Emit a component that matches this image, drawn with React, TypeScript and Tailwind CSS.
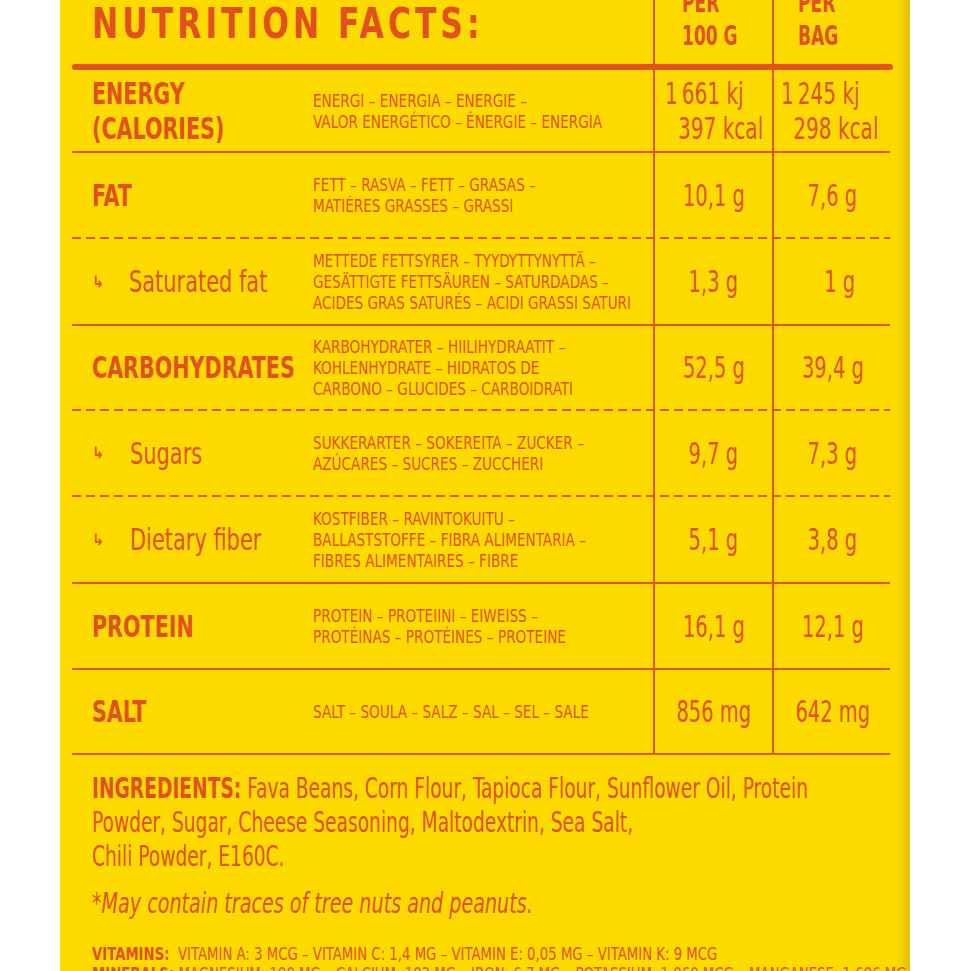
import React from "react";

const FONT = "font-['Liberation_Sans_Narrow','DejaVu_Sans_Condensed','Roboto',sans-serif] [font-stretch:condensed]";

function X({ c, children }: { c: string; children: React.ReactNode }) {
  return <span className={`inline-block whitespace-nowrap ${c}`}>{children}</span>;
}

type Row = {
  label: React.ReactNode;
  sub?: boolean;
  trans: string[];
  v1: React.ReactNode;
  v2: React.ReactNode;
  h: string;
  line: "solid" | "dashed";
  energy?: boolean;
};

const NB = "\u202F";

const rows: Row[] = [
  {
    label: (
      <>
        ENERGY
        <br />
        (CALORIES)
      </>
    ),
    trans: ["ENERGI – ENERGIA – ENERGIE –", "VALOR ENERGÉTICO – ÉNERGIE – ENERGIA"],
    v1: (
      <div className="flex flex-col items-start leading-[35px]">
        <span>{`1${NB}661 kj`}</span>
        <span className="pl-[18px]">397 kcal</span>
      </div>
    ),
    v2: (
      <div className="flex flex-col items-start leading-[35px]">
        <span>{`1${NB}245 kj`}</span>
        <span className="pl-[17px]">298 kcal</span>
      </div>
    ),
    h: "h-[81px]",
    line: "solid",
    energy: true,
  },
  {
    label: "FAT",
    trans: ["FETT – RASVA – FETT – GRASAS –", "MATIÉRES GRASSES – GRASSI"],
    v1: "10,1 g",
    v2: "7,6 g",
    h: "h-[84px]",
    line: "dashed",
  },
  {
    label: "Saturated fat",
    sub: true,
    trans: [
      "METTEDE FETTSYRER – TYYDYTTYNYTTÄ –",
      "GESÄTTIGTE FETTSÄUREN – SATURDADAS –",
      "ACIDES GRAS SATURÉS – ACIDI GRASSI SATURI",
    ],
    v1: "1,3 g",
    v2: <span className="pl-[20px]">1 g</span>,
    h: "h-[85px]",
    line: "solid",
  },
  {
    label: "CARBOHYDRATES",
    trans: ["KARBOHYDRATER – HIILIHYDRAATIT –", "KOHLENHYDRATE – HIDRATOS DE", "CARBONO – GLUCIDES – CARBOIDRATI"],
    v1: "52,5 g",
    v2: "39,4 g",
    h: "h-[83px]",
    line: "dashed",
  },
  {
    label: "Sugars",
    sub: true,
    trans: ["SUKKERARTER – SOKEREITA – ZUCKER –", "AZÚCARES – SUCRES – ZUCCHERI"],
    v1: "9,7 g",
    v2: "7,3 g",
    h: "h-[84px]",
    line: "dashed",
  },
  {
    label: "Dietary fiber",
    sub: true,
    trans: ["KOSTFIBER – RAVINTOKUITU –", "BALLASTSTOFFE – FIBRA ALIMENTARIA –", "FIBRES ALIMENTAIRES – FIBRE"],
    v1: "5,1 g",
    v2: "3,8 g",
    h: "h-[85px]",
    line: "solid",
  },
  {
    label: "PROTEIN",
    trans: ["PROTEIN – PROTEIINI – EIWEISS –", "PROTÉINAS – PROTÉINES – PROTEINE"],
    v1: "16,1 g",
    v2: "12,1 g",
    h: "h-[84px]",
    line: "solid",
  },
  {
    label: "SALT",
    trans: ["SALT – SOULA – SALZ – SAL – SEL – SALE"],
    v1: "856 mg",
    v2: "642 mg",
    h: "h-[83px]",
    line: "solid",
  },
];

function Sep({ kind }: { kind: "solid" | "dashed" }) {
  if (kind === "solid") return <div className="h-[2px] w-[818px] bg-[#E4531C]" />;
  return (
    <div className="h-[2px] w-[818px] bg-[linear-gradient(to_right,#E4531C_9px,transparent_9px)] bg-[length:14px_2px] bg-repeat-x" />
  );
}

export default function App() {
  return (
    <div className={`min-h-screen bg-white ${FONT} text-[#E1501E]`}>
      <div className="ml-[60px] w-[850px] h-[971px] overflow-hidden bg-[#FDDB00] shadow-[inset_-14px_0_10px_-8px_rgba(180,140,0,0.35)]">
        <div className="ml-[12px] w-[821px]">
          {/* header */}
          <div className="grid grid-cols-[581px_119px_120px] grid-rows-[64px] h-[64px] overflow-hidden">
            <div className="pl-[20px] pt-[1px]">
              <X c="origin-left scale-x-[0.81] text-[43px] font-bold leading-[44px] tracking-[5px]">NUTRITION FACTS:</X>
            </div>
            <div className="border-l-2 border-[#E4531C] pl-[27px] text-[26px] font-bold leading-[33px]">
              <div className="-mt-[13px] flex flex-col items-start">
                <X c="origin-left scale-x-[0.73]">PER</X>
                <X c="origin-left scale-x-[0.73]">100 G</X>
              </div>
            </div>
            <div className="border-l-2 border-[#E4531C] pl-[24px] text-[26px] font-bold leading-[33px]">
              <div className="-mt-[13px] flex flex-col items-start">
                <X c="origin-left scale-x-[0.73]">PER</X>
                <X c="origin-left scale-x-[0.73]">BAG</X>
              </div>
            </div>
          </div>
          <div className="h-[6px] w-[821px] rounded-full bg-[#E4531C]" />

          {rows.map((r, i) => (
            <React.Fragment key={i}>
              <div className={`grid grid-cols-[581px_119px_119px] ${r.h}`}>
                <div className="flex items-center pl-[20px]">
                  <div className="w-[221px] shrink-0">
                    {r.sub ? (
                      <div className="flex items-center">
                        <span className="w-[38px] text-[16px] font-bold">↳</span>
                        <X c="origin-left scale-x-[0.75] text-[31px] leading-[35px]">{r.label}</X>
                      </div>
                    ) : (
                      <X c="origin-left scale-x-[0.74] text-[31px] font-bold leading-[35px]">{r.label}</X>
                    )}
                  </div>
                  <X c="origin-left scale-x-[0.84] text-[18px] leading-[21px]">
                    {r.trans.map((t, j) => (
                      <div key={j}>{t}</div>
                    ))}
                  </X>
                </div>
                {r.energy ? (
                  <>
                    <div className="border-l-2 border-[#E4531C] flex items-center pl-[10px] text-[31px]">
                      <X c="origin-left scale-x-[0.72]">{r.v1}</X>
                    </div>
                    <div className="border-l-2 border-[#E4531C] flex items-center pl-[7px] text-[31px]">
                      <X c="origin-left scale-x-[0.72]">{r.v2}</X>
                    </div>
                  </>
                ) : (
                  <>
                    <div className="border-l-2 border-[#E4531C] flex items-center justify-center text-[30px] leading-[35px]">
                      <X c="origin-center scale-x-[0.72]">{r.v1}</X>
                    </div>
                    <div className="border-l-2 border-[#E4531C] flex items-center justify-center text-[30px] leading-[35px]">
                      <X c="origin-center scale-x-[0.72]">{r.v2}</X>
                    </div>
                  </>
                )}
              </div>
              <Sep kind={r.line} />
            </React.Fragment>
          ))}

          {/* ingredients */}
          <div className="pl-[20px] pt-[17px]">
            <X c="origin-left scale-x-[0.74] text-[28px] leading-[34px]">
              <div>
                <span className="font-bold">INGREDIENTS:</span> Fava Beans, Corn Flour, Tapioca Flour, Sunflower Oil, Protein
              </div>
              <div>Powder, Sugar, Cheese Seasoning, Maltodextrin, Sea Salt,</div>
              <div>Chili Powder, E160C.</div>
            </X>
            <div className="mt-[13px]">
              <X c="origin-left scale-x-[0.76] text-[28px] leading-[34px] italic">*May contain traces of tree nuts and peanuts.</X>
            </div>
            <div className="mt-[23px]">
              <X c="origin-left scale-x-[0.82] text-[18px] leading-[20px]">
                <div>
                  <span className="font-bold">VITAMINS:</span>&nbsp; VITAMIN A: 3 MCG – VITAMIN C: 1,4 MG – VITAMIN E: 0,05 MG – VITAMIN K: 9 MCG
                </div>
                <div>
                  <span className="font-bold">MINERALS:</span> MAGNESIUM: 190 MG – CALCIUM: 103 MG – IRON: 6,7 MG – POTASSIUM: 1 060 MCG – MANGANESE: 1 696 MG
                </div>
              </X>
            </div>
          </div>
        </div>
      </div>
    </div>
  );
}
